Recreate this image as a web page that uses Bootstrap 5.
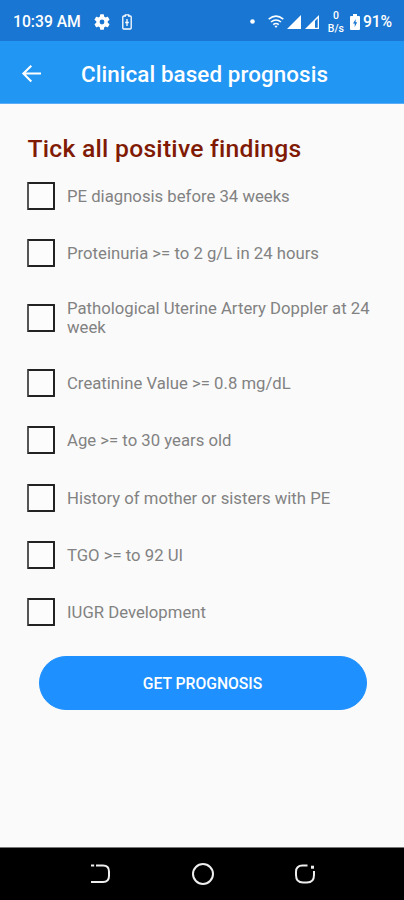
<!DOCTYPE html>
<html lang="en">
<head>
<meta charset="utf-8">
<meta name="viewport" content="width=device-width, initial-scale=1">
<title>Clinical based prognosis</title>
<link href="https://cdn.jsdelivr.net/npm/bootstrap@5.3.0/dist/css/bootstrap.min.css" rel="stylesheet">
<style>
body{font-family:Roboto,"Liberation Sans",sans-serif;background:#fafafa;color:#828282;height:900px;overflow:hidden}
svg{display:block;flex:none}
.status-bar{height:41px;background:#1976d2;padding:2px 12px 0 13px;font-size:15.7px;font-weight:500;line-height:1}
.status-bar .battery-saver{margin-left:12px}
.status-bar .dot{margin-left:118px}
.status-bar .wifi{margin-left:13px}
.status-bar .signal{margin-left:3px}
.status-bar .battery{margin-left:5px}
.status-bar .level{margin-left:3px;letter-spacing:-.1px}
.app-bar{height:63px;background:#2196f3;padding:3px 20px 0 21px;border-bottom:1px solid #59aef5}
.app-title{font-size:22.4px;font-weight:500;line-height:1;margin-left:39px;letter-spacing:.08px;padding-top:1px}
.net-speed{font-size:10.5px;line-height:13px;width:18px;margin-left:8px}
.screen-heading{font-size:24.7px;font-weight:500;line-height:30px;color:#801a05;margin:30px 0 3px 27.5px;letter-spacing:.25px}
.finding-row{min-height:57.4px;padding:0 27px;gap:12px;margin:0}
.finding-row.tall{min-height:72.4px}
.finding-row .form-check-input{width:28px;height:28px;border:2px solid #222;border-left-color:#555;border-radius:1px;margin:0;background-color:#fcfcfc;flex:none}
.finding-row .form-check-label{font-size:16.7px;line-height:19px;padding-top:1px;letter-spacing:.01px}
.btn-prognosis{--bs-btn-bg:#1e90ff;--bs-btn-color:#fff;--bs-btn-border-color:#1e90ff;--bs-btn-padding-y:0;width:328px;height:54px;margin:15px 0 0 38.5px;padding-top:2px;font-size:15.7px;font-weight:500}
.nav-strip{height:53px;background:#000;border-top:1px solid #777;gap:80px;padding-left:1px}
</style>
<script src="https://cdn.jsdelivr.net/npm/bootstrap@5.3.0/dist/js/bootstrap.bundle.min.js"></script>
</head>
<body class="d-flex flex-column">
<header class="text-white">
  <div class="status-bar d-flex align-items-center">
    <span>10:39 AM</span>
    <svg class="ms-auto" width="16" height="16" viewBox="2 2 20 20" fill="#fff"><path d="M19.14 12.94c.04-.3.06-.61.06-.94s-.02-.64-.07-.94l2.03-1.58a.49.49 0 0 0 .12-.61l-1.92-3.32a.49.49 0 0 0-.59-.22l-2.39.96a7 7 0 0 0-1.62-.94l-.36-2.54a.48.48 0 0 0-.48-.41h-3.84a.48.48 0 0 0-.47.41l-.36 2.54c-.59.24-1.13.57-1.62.94l-2.39-.96a.48.48 0 0 0-.59.22L2.74 8.87a.48.48 0 0 0 .12.61l2.03 1.58a6 6 0 0 0 0 1.88l-2.03 1.58a.49.49 0 0 0-.12.61l1.92 3.32c.12.22.37.29.59.22l2.39-.96c.5.38 1.03.7 1.62.94l.36 2.54c.05.24.24.41.48.41h3.84c.24 0 .44-.17.47-.41l.36-2.54a7 7 0 0 0 1.62-.94l2.39.96c.22.08.47 0 .59-.22l1.92-3.32a.48.48 0 0 0-.12-.61zM12 15a3 3 0 1 1 0-6 3 3 0 0 1 0 6z"/></svg>
    <svg class="battery-saver" width="10" height="16" viewBox="0 0 10 16" fill="none" stroke="#fff" stroke-width="1.3"><path d="M3.3 2V.8h3.4V2H8.2q1 0 1 1v11q0 1-1 1H1.8q-1 0-1-1V3q0-1 1-1z"/><path d="M5 5v7M3.2 8.5h3.6"/></svg>
    <svg class="dot" width="5" height="5" viewBox="0 0 5 5"><circle cx="2.5" cy="2.5" r="2.3" fill="#fff"/></svg>
    <svg class="wifi" width="16" height="14" viewBox="0 0 16 14" fill="none" stroke="#fff" stroke-width="1.6"><path d="M.7 4.2Q8-1.8 15.3 4.2M3 7Q8 3 13 7M5.2 9.6Q8 7.4 10.8 9.6"/><path d="M6.3 10.7h3.4L8 13z" fill="#fff" stroke="none"/></svg>
    <svg class="signal" width="32" height="14" viewBox="0 0 32 14" fill="#fff"><path d="M0 14L14 0v14z"/><path d="M18 14L32 0v14z"/><path d="M28 6l2.7-2.7v9.4H28z" fill="#1976d2"/></svg>
    <span class="net-speed text-center">0<br>B/s</span>
    <svg class="battery" width="10" height="16" viewBox="0 0 10 16"><path fill="#fff" d="M3 2V0h4v2h2q1 0 1 1v12q0 1-1 1H1q-1 0-1-1V3q0-1 1-1z"/><path d="M5.8 5L3 9.5h1.7V13L7.2 8.3H5.5z" fill="#1976d2"/></svg>
    <span class="level">91%</span>
  </div>
  <div class="app-bar d-flex align-items-center">
    <svg width="21" height="18" viewBox="0 0 21 18" fill="none" stroke="#fff" stroke-width="2.1"><path d="M20 8.5H3M10.3 .8L2.4 8.6l7.9 7.9"/></svg>
    <h1 class="app-title mb-0">Clinical based prognosis</h1>
  </div>
</header>
<main class="flex-grow-1">
  <h2 class="screen-heading">Tick all positive findings</h2>
  <form>
    <div class="finding-row d-flex align-items-center"><input class="form-check-input" type="checkbox" id="f1"><label class="form-check-label" for="f1">PE diagnosis before 34 weeks</label></div>
    <div class="finding-row d-flex align-items-center"><input class="form-check-input" type="checkbox" id="f2"><label class="form-check-label" for="f2">Proteinuria &gt;= to 2 g/L in 24 hours</label></div>
    <div class="finding-row tall d-flex align-items-center"><input class="form-check-input" type="checkbox" id="f3"><label class="form-check-label" for="f3">Pathological Uterine Artery Doppler at 24 week</label></div>
    <div class="finding-row d-flex align-items-center"><input class="form-check-input" type="checkbox" id="f4"><label class="form-check-label" for="f4">Creatinine Value &gt;= 0.8 mg/dL</label></div>
    <div class="finding-row d-flex align-items-center"><input class="form-check-input" type="checkbox" id="f5"><label class="form-check-label" for="f5">Age &gt;= to 30 years old</label></div>
    <div class="finding-row d-flex align-items-center"><input class="form-check-input" type="checkbox" id="f6"><label class="form-check-label" for="f6">History of mother or sisters with PE</label></div>
    <div class="finding-row d-flex align-items-center"><input class="form-check-input" type="checkbox" id="f7"><label class="form-check-label" for="f7">TGO &gt;= to 92 UI</label></div>
    <div class="finding-row d-flex align-items-center"><input class="form-check-input" type="checkbox" id="f8"><label class="form-check-label" for="f8">IUGR Development</label></div>
    <button type="button" class="btn btn-prognosis rounded-pill text-uppercase">Get prognosis</button>
  </form>
</main>
<nav class="nav-strip d-flex justify-content-center align-items-center">
  <svg width="22" height="22" viewBox="0 0 22 22" fill="none" stroke="#eee" stroke-width="2"><path d="M1 2.5h3.2M6 2.5h7q6 0 6 6v4.500q0 6-6 6H1"/></svg>
  <svg width="22" height="22" viewBox="0 0 22 22" fill="none" stroke="#eee" stroke-width="2"><circle cx="11" cy="11" r="10"/></svg>
  <svg width="22" height="22" viewBox="0 0 22 22" fill="none" stroke="#eee" stroke-width="2"><path d="M13.500 2.500H8.500Q2 2.500 2 9v3q0 7.500 7 7.500h4q7 0 7-7.500V8"/><path d="M17 4.200h3" stroke-width="3"/></svg>
</nav>
</body>
</html>
